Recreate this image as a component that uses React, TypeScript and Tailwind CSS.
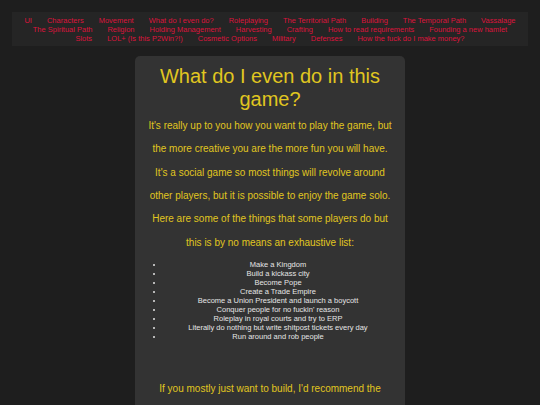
import React from "react";

const navLinks = [
  "UI",
  "Characters",
  "Movement",
  "What do I even do?",
  "Roleplaying",
  "The Territorial Path",
  "Building",
  "The Temporal Path",
  "Vassalage",
  "The Spiritual Path",
  "Religion",
  "Holding Management",
  "Harvesting",
  "Crafting",
  "How to read requirements",
  "Founding a new hamlet",
  "Slots",
  "LOL+ (Is this P2Win?!)",
  "Cosmetic Options",
  "Military",
  "Defenses",
  "How the fuck do I make money?",
];

const intro = [
  "It's really up to you how you want to play the game, but",
  "the more creative you are the more fun you will have.",
  "It's a social game so most things will revolve around",
  "other players, but it is possible to enjoy the game solo.",
  "Here are some of the things that some players do but",
  "this is by no means an exhaustive list:",
];

const things = [
  "Make a Kingdom",
  "Build a kickass city",
  "Become Pope",
  "Create a Trade Empire",
  "Become a Union President and launch a boycott",
  "Conquer people for no fuckin' reason",
  "Roleplay in royal courts and try to ERP",
  "Literally do nothing but write shitpost tickets every day",
  "Run around and rob people",
];

export default function App() {
  return (
    <div className="min-h-screen bg-[#1e1e1e] pt-[12px] font-['Liberation_Sans',Arial,sans-serif]">
      {/* Top nav */}
      <nav className="mx-[12px] bg-[#252525] px-[10px] py-[3.5px]">
        <ul className="flex flex-wrap justify-center gap-x-[15px] text-[7.5px] leading-[9px] text-[#dc143c]">
          {navLinks.map((l) => (
            <li key={l}>
              <a href="#">{l}</a>
            </li>
          ))}
        </ul>
      </nav>

      {/* Content card */}
      <main className="mx-auto mt-[10px] w-[270px] rounded-[5px] bg-[#333333] px-[9px] pt-[8.5px] pb-[20px] text-center text-[#e0c620]">
        <h1 className="text-[20px] leading-[23.3px]">What do I even do in this game?</h1>
        <p className="mt-[3px] text-[10px] leading-[23.3px]">
          {intro.map((line) => (
            <span key={line} className="block">
              {line}
            </span>
          ))}
        </p>
        <ul className="mt-[6px] list-disc pl-[20px] pr-[4px] text-[7.5px] leading-[9px] text-[#e5e5e5]">
          {things.map((t) => (
            <li key={t}>{t}</li>
          ))}
        </ul>
        <p className="mt-[36.6px] text-[10px] leading-[23.3px]">
          If you mostly just want to build, I'd recommend the
        </p>
      </main>
    </div>
  );
}
